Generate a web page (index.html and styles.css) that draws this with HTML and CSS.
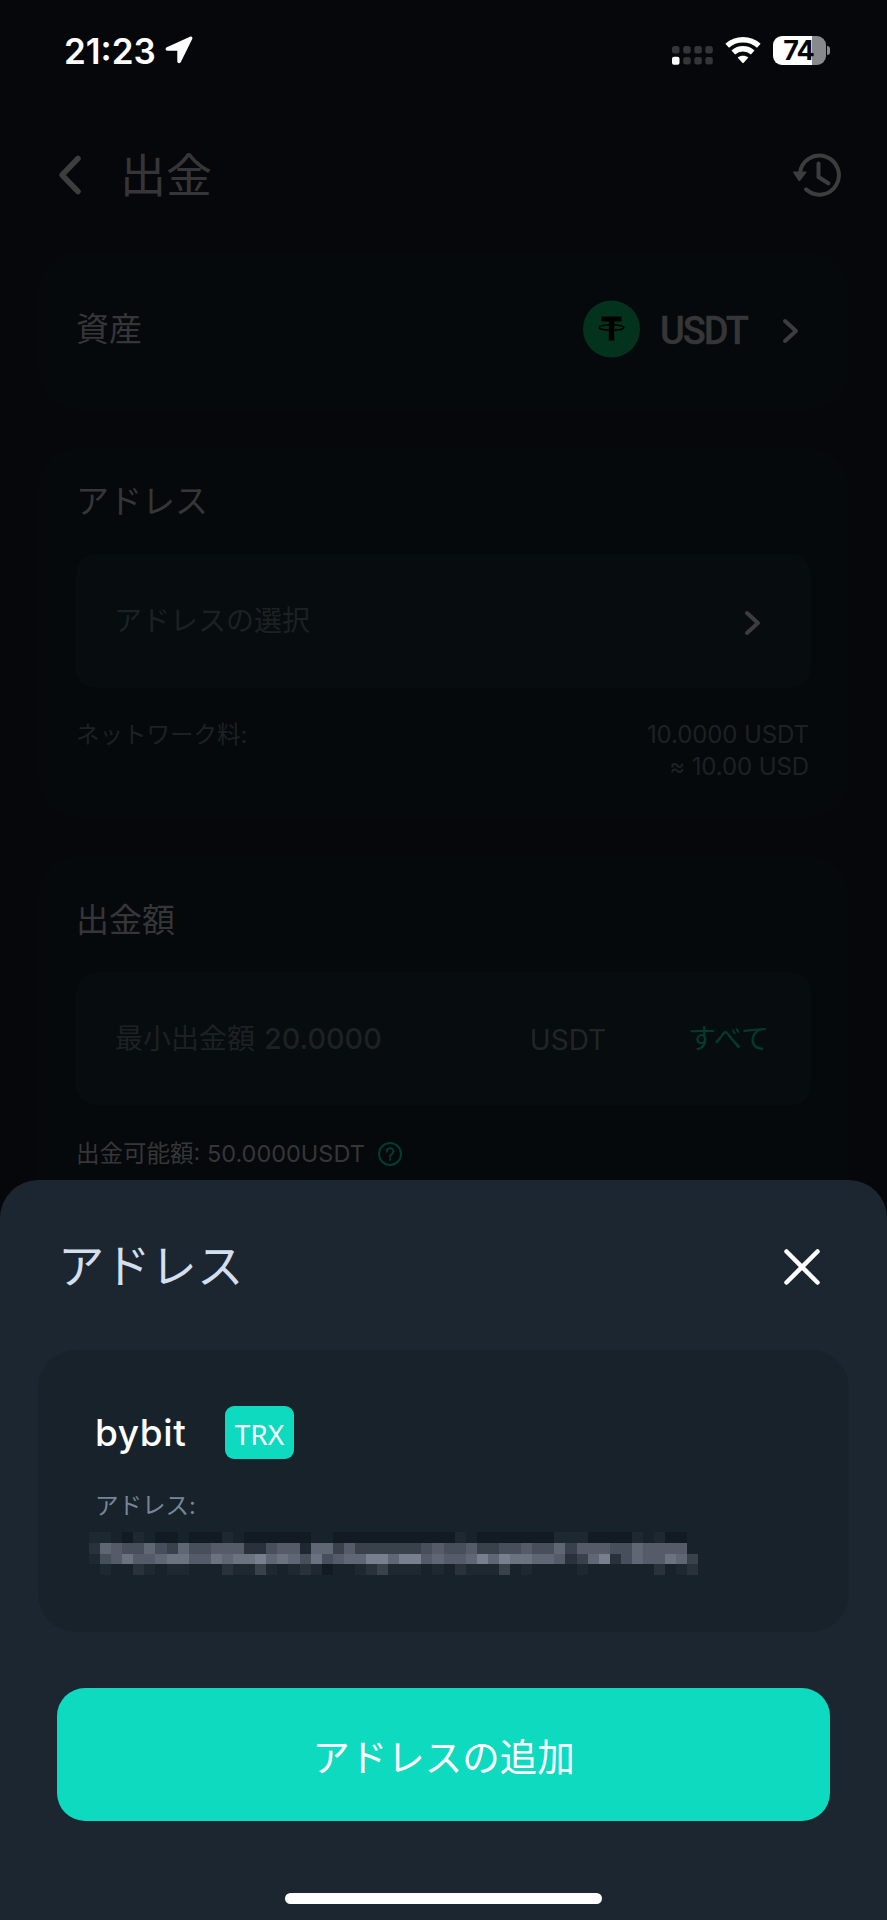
FILE: index.html
```html
<!DOCTYPE html>
<html lang="ja">
<head>
<meta charset="utf-8">
<title>出金</title>
<link rel="stylesheet" href="styles.css">
</head>
<body>
<div class="screen">
  <header class="status">
    <span class="time">21:23</span>
    <svg class="location" width="28" height="28" viewBox="0 0 28 28"><path d="M25 .8 1.800 11.200c-1.900 1-1.400 3.500.5 3.500H12.300V25.200c0 2.200 2.700 2.600 3.600.8L27.200 3c.7-1.600-.6-2.900-2.200-2.200z"/></svg>
    <svg class="signal" width="42" height="20" viewBox="0 0 42 20">
      <g class="signal-off"><rect x="0" y="0" width="7.500" height="7.500" rx="2.500"/><rect x="11.200" y="0" width="7.500" height="7.500" rx="2.500"/><rect x="22.300" y="0" width="7.500" height="7.500" rx="2.500"/><rect x="33.300" y="0" width="7.500" height="7.500" rx="2.500"/><rect x="11.200" y="11" width="7.500" height="7.500" rx="2.500"/><rect x="22.300" y="11" width="7.500" height="7.500" rx="2.500"/><rect x="33.300" y="11" width="7.500" height="7.500" rx="2.500"/></g>
      <rect class="signal-on" x="0" y="10.800" width="7.500" height="8" rx="2"/>
    </svg>
    <svg class="wifi" width="36" height="27" viewBox="0 0 36 27"><path class="wifi-arc" d="M2.200 8.800C11 .7 25 .7 33.800 8.800M8.300 15.500c5.600-5 13.800-5 19.400 0"/><path class="wifi-dot" d="M12.600 20.600c3.200-2.600 7.600-2.600 10.800 0L18.700 25.800c-.4.5-1 .5-1.400 0z"/></svg>
    <div class="battery"><span>74</span></div>
    <i class="battery-cap"></i>
  </header>

  <nav class="nav">
    <svg class="back" width="24" height="42" viewBox="0 0 24 42"><path d="M20 4.500 4 21 20 37.500"/></svg>
    <h1>出金</h1>
    <svg class="history" width="50" height="46" viewBox="0 0 50 46"><path class="line" d="M9 21A19.500 19.500 0 1 1 15 37.300M27.500 11.500V25L37.300 31.300"/><path class="head" d="M2.500 19.500Q1.500 19.500 2.300 20.800L7.300 28.600Q8.300 29.800 9.300 28.600L15.300 20.800Q16 19.500 14.800 19.500Z"/></svg>
  </nav>

  <main class="content">
    <section class="card asset">
      <h2>資産</h2>
      <svg class="tether" width="58" height="58" viewBox="0 0 58 58"><circle class="coin" cx="28.500" cy="29" r="28.500"/><path class="tee" d="M18.500 16.500H38.500V21.500H31.200V40.500H25.800V21.500H18.500z"/><ellipse class="ring" cx="28.500" cy="27.500" rx="12.300" ry="2.700"/></svg>
      <span class="coin-name">USDT</span>
      <svg class="chevron" width="17" height="26" viewBox="0 0 17 26"><path d="M3 3 14 13 3 23"/></svg>
    </section>

    <section class="card address">
      <h2>アドレス</h2>
      <div class="field"><span class="placeholder">アドレスの選択</span><svg class="chevron" width="17" height="26" viewBox="0 0 17 26"><path d="M3 3 14 13 3 23"/></svg></div>
      <div class="fee"><span class="fee-label">ネットワーク料:</span><span class="fee-value">10.0000 USDT<br>≈ 10.00 USD</span></div>
    </section>

    <section class="card amount">
      <h2>出金額</h2>
      <div class="field"><span class="placeholder">最小出金額 <b>20.0000</b></span><span class="unit">USDT</span><a class="all">すべて</a></div>
      <div class="available"><span>出金可能額: 50.0000USDT</span><svg width="26" height="26" viewBox="0 0 26 26"><circle cx="13" cy="13" r="11"/><path d="M9.700 10.700C9.700 6.200 16.400 6.300 16.400 10.400C16.400 13 13 13 13 16"/><path d="M13 18.200v.8"/></svg></div>
    </section>
  </main>

  <section class="sheet">
    <div class="sheet-head">
      <h2>アドレス</h2>
      <svg class="close" width="40" height="40" viewBox="0 0 40 40"><path d="M4.500 4.500 35.500 35.500M35.500 4.500 4.500 35.500"/></svg>
    </div>
    <article class="wallet">
      <div class="wallet-head"><strong>bybit</strong><span class="badge">TRX</span></div>
      <p>アドレス:</p>
      <div class="mosaic" id="mosaic"></div>
    </article>
    <button class="add">アドレスの追加</button>
    <i class="home"></i>
  </section>
</div>
<script src="mosaic.js"></script>
</body>
</html>
```

FILE: styles.css
```css
* { box-sizing: border-box; margin: 0; padding: 0; }
body { background: #060709; font-family: Inter, "Noto Sans CJK JP", sans-serif; }
svg { display: block; flex: none; fill: none; stroke-linecap: round; stroke-linejoin: round; }
h1, h2 { font-weight: 400; }

.screen { width: 887px; height: 1920px; overflow: hidden; display: flex; flex-direction: column; background: #06070a; color: #363639; }

.status { height: 102px; padding: 0 57px 2px 64px; display: flex; align-items: center; flex: none; }
.time { color: #fff; font-size: 35px; font-weight: 600; line-height: 40px; width: 101px; white-space: nowrap; padding-top: 1px; }
.location { fill: #fff; }
.signal { margin-left: auto; margin-top: 12px; }
.signal-off { fill: #343538; }
.signal-on { fill: #fff; }
.wifi { margin-left: 11px; }
.wifi-arc { stroke: #fff; stroke-width: 5.400; stroke-linecap: butt; }
.wifi-dot { fill: #fff; }
.battery { margin-left: 12px; width: 53px; height: 29px; border-radius: 9px; background: linear-gradient(90deg, #fff 39px, #88898b 39px); color: #060709; font-size: 27px; font-weight: 700; line-height: 29px; text-align: center; letter-spacing: -1px; padding-right: 2px; }
.battery-cap { width: 3px; height: 9px; margin-left: 1px; background: #88898b; border-radius: 0 4px 4px 0; }

.nav { height: 150px; padding: 0 46px 4px 58px; display: flex; align-items: center; flex: none; }
.back { stroke: #3d3d3d; stroke-width: 5.500; }
.nav h1 { margin-left: 38px; font-size: 46px; line-height: 60px; }
.history { margin-left: auto; }
.history .line { stroke: #3d3d3d; stroke-width: 4; }
.history .head { fill: #3d3d3d; }

.content { height: 928px; padding: 0 38px; flex: none; display: flex; flex-direction: column; gap: 38px; overflow: hidden; }
.card { background: #05090b; border-radius: 38px; padding: 0 38px; flex: none; }
.card h2 { font-size: 33px; line-height: 44px; }
.asset { height: 158px; display: flex; align-items: center; padding-bottom: 4px; }
.tether { margin-left: auto; }
.coin { fill: #04331d; }
.tee { fill: #000; }
.ring { stroke: #000; stroke-width: 1.600; }
.coin-name { width: 122px; margin-left: 19px; font: 500 38px/44px Roboto, sans-serif; letter-spacing: -2px; padding-top: 3px; -webkit-text-stroke: .3px; }
.chevron { stroke: #3d3d3d; stroke-width: 4; }
.asset .chevron { margin: 4px 12px 0 0; }
.address { height: 370px; padding-top: 31px; }
.field { height: 134px; margin-top: 31px; border-radius: 20px; background: #070c0f; display: flex; align-items: center; padding: 0 40px 0 38px; color: #1d2123; font-size: 28px; line-height: 40px; }
.field .chevron { margin: 4px 10px 0 auto; }
.field b { font-weight: 500; font-size: 28.800px; margin-left: 1px; }
.fee { margin-top: 31px; display: flex; justify-content: space-between; color: #1d2123; font-size: 24px; line-height: 32px; }
.fee-label { font-size: 23.500px; }
.fee-value { text-align: right; padding-right: 2px; letter-spacing: -.1px; }
.amount { height: 400px; padding-top: 42px; }
.amount .field { height: 133px; margin-top: 30px; padding-left: 39px; }
.unit { margin: 2px 82px 0 auto; color: #222528; }
.all { color: #033a2d; margin-right: 2px; }
.available { display: flex; align-items: center; gap: 12px; margin-top: 33px; font-size: 23.500px; line-height: 32px; }
.available svg { stroke: #033a31; stroke-width: 2; }

.sheet { flex: 1; background: #1b2630; border-radius: 38px 38px 0 0; padding: 0 38px; display: flex; flex-direction: column; }
.sheet-head { height: 170px; padding: 0 27px 0 20px; display: flex; align-items: center; justify-content: space-between; }
.sheet-head h2 { color: #d3dfee; font-size: 46.300px; line-height: 60px; padding-top: 2px; }
.close { stroke: #fff; stroke-width: 4.500; margin-top: 4px; }
.wallet { height: 282px; background: #18222b; border-radius: 38px; padding: 56px 51px 0 57px; }
.wallet-head { height: 53px; display: flex; align-items: center; }
.wallet strong { width: 130px; color: #fff; font-size: 37px; font-weight: 500; line-height: 48px; letter-spacing: .6px; }
.badge { width: 69px; height: 53px; border-radius: 9px; background: #0ddabf; color: #fff; font: 400 28px/57px "Noto Sans", sans-serif; text-align: center; }
.wallet p { color: #768698; font-size: 23.500px; line-height: 32px; margin-top: 31px; }
.mosaic { width: 620.500px; height: 43px; margin: 10px 0 0 -6px; display: grid; grid-template: repeat(4, 1fr) / repeat(56, 1fr); }
.t0 { background: #121b24; } .t1 { background: #18222b; } .t2 { background: #1e2831; } .t3 { background: #29323b; }
.t4 { background: #39414b; } .t5 { background: #474f5a; } .t6 { background: #555c67; } .t7 { background: #5f6772; }
.t8 { background: #6a737f; } .t9 { background: #77808b; }
.add { flex: none; height: 133px; margin: 56px 19px 0; border: 0; border-radius: 28px; background: #0ddabf; color: #fff; font: 400 37.500px/50px "Noto Sans CJK JP", sans-serif; }
.home { width: 317px; height: 11px; border-radius: 6px; background: #fff; margin: 72px auto 0; }
```

FILE: mosaic.js
```js
const rows = [
  "22102100100021000000110000000000021000000022200002120011",
  "37655754755666335662774644444456556445565574666557666611",
  "25686678866878897875856779979967667979887763479357668741",
  "12113212211132242123201123422212132224121111211111131231"
];
const mosaic = document.getElementById("mosaic");
for (const row of rows) {
  for (const tone of row) {
    const cell = document.createElement("i");
    cell.className = "t" + tone;
    mosaic.append(cell);
  }
}
```
